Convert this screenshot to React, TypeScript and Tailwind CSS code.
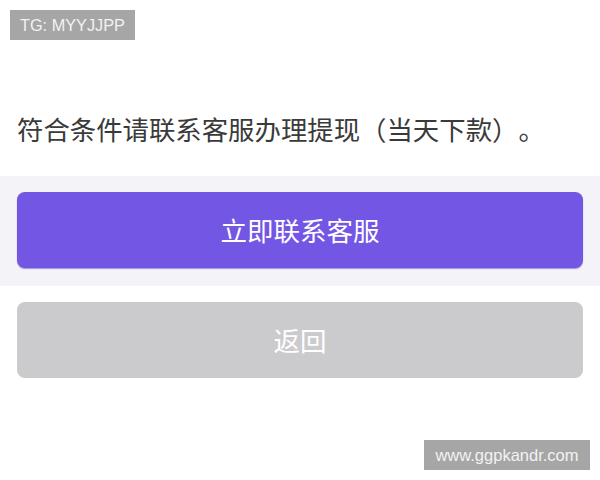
export default function App() {
  const cjk = { fontFamily: '"Noto Sans CJK SC", "Noto Sans", sans-serif' };
  const latin = { fontFamily: '"Liberation Sans", Arial, sans-serif' };
  return (
    <div className="relative w-[600px] h-[480px] bg-white overflow-hidden" style={cjk}>
      <div className="pt-[111px] pl-[17px] text-[26.4px] leading-[36px] text-[#3a3a3a] whitespace-nowrap [text-spacing-trim:space-all]">
        符合条件请联系客服办理提现（当天下款）。
      </div>
      <div className="mt-[29px] bg-[#f4f3f8] px-[17px] pt-[16px] pb-[18px]">
        <button className="w-full h-[76px] rounded-[8px] bg-[#7356e4] text-white text-[26.5px] flex items-center justify-center shadow-[0_1px_1px_rgba(80,50,180,0.5)]">
          立即联系客服
        </button>
      </div>
      <div className="px-[17px] mt-[16px]">
        <button className="w-full h-[76px] rounded-[8px] bg-[#cbcbcd] text-white text-[26.5px] flex items-center justify-center">
          返回
        </button>
      </div>
      <div
        className="absolute left-[10px] top-[10px] w-[125px] h-[30px] bg-[#a6a6a6] text-[#f2f2f2] text-[16.3px] flex items-center justify-center"
        style={latin}
      >
        TG: MYYJJPP
      </div>
      <div
        className="absolute left-[424px] top-[440px] w-[166px] h-[30px] bg-[#a6a6a6] text-[#f2f2f2] text-[16.5px] flex items-center justify-center"
        style={latin}
      >
        www.ggpkandr.com
      </div>
    </div>
  );
}
